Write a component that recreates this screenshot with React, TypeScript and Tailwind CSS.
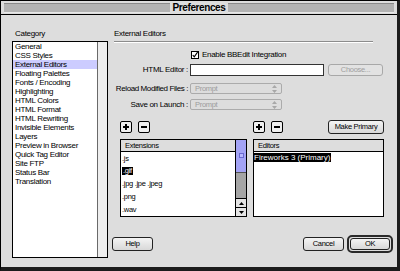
import React from "react";

const categories = [
  "General",
  "CSS Styles",
  "External Editors",
  "Floating Palettes",
  "Fonts / Encoding",
  "Highlighting",
  "HTML Colors",
  "HTML Format",
  "HTML Rewriting",
  "Invisible Elements",
  "Layers",
  "Preview in Browser",
  "Quick Tag Editor",
  "Site FTP",
  "Status Bar",
  "Translation",
];

const extensions = [".js", ".gif", ".jpg .jpe .jpeg", ".png", ".wav"];

const Arrows = ({ color }: { color: string }) => (
  <svg width="5" height="8" viewBox="0 0 5 8">
    <path d="M2.5 0 L5 3 H0 Z M0 5 H5 L2.5 8 Z" fill={color} />
  </svg>
);

const SmallButton = ({ sign }: { sign: "+" | "-" }) => (
  <div className="w-[12px] h-[12px] border border-black rounded-[2px] bg-[#eeeeee] flex items-center justify-center">
    <svg width="6" height="6" viewBox="0 0 6 6">
      <path d="M0 3 H6" stroke="#000" strokeWidth="2" />
      {sign === "+" && <path d="M3 0 V6" stroke="#000" strokeWidth="2" />}
    </svg>
  </div>
);

const Popup = () => (
  <div className="w-[92px] h-[11px] border border-[#ababab] rounded-[2px] flex items-center pl-[4px] pr-[4px] text-[#9c9c9c] text-[7.5px]">
    <span>Prompt</span>
    <span className="ml-auto flex">
      <Arrows color="#a8a8a8" />
    </span>
  </div>
);

const PushButton = ({ label, className = "" }: { label: string; className?: string }) => (
  <div
    className={`h-[14px] border border-[#222] rounded-[3px] bg-gradient-to-b from-[#f4f4f4] to-[#d8d8d8] flex items-center justify-center text-[7.5px] ${className}`}
  >
    {label}
  </div>
);

export default function App() {
  return (
    <div className="w-[400px] h-[271px] bg-[#dddddd] border-l border-t border-black border-r-[3px] border-b-[4px] border-r-[#1c1c1c] border-b-[#1c1c1c] flex flex-col font-['Liberation_Sans',Arial,sans-serif] text-black leading-none overflow-hidden">
      {/* title bar */}
      <div className="h-[14px] border-b border-black flex items-stretch px-[3px] pt-[2px] pb-[1px]">
        <div className="flex-1 bg-[#b3b3b3] border-t border-[#8a8a8a] border-b border-b-[#e8e8e8]" />
        <div className="px-[3px] text-[10px] font-bold tracking-[-0.4px] flex items-center">Preferences</div>
        <div className="flex-1 bg-[#b3b3b3] border-t border-[#8a8a8a] border-b border-b-[#e8e8e8]" />
      </div>

      <div className="flex flex-1 text-[8px] tracking-[-0.3px]">
        {/* category column */}
        <div className="ml-[11px] w-[96px] flex flex-col">
          <div className="mt-[14px] h-[9px] leading-[9px] pl-[3px]">Category</div>
          <div className="mt-[3px] h-[217px] border border-black bg-white flex">
            <div className="flex-1 flex flex-col">
              {categories.map((c) => (
                <div
                  key={c}
                  className={`h-[9px] leading-[9px] pl-[2px] ${c === "External Editors" ? "bg-[#ccccff]" : ""}`}
                >
                  {c}
                </div>
              ))}
            </div>
            <div className="w-[10px] border-l border-[#6a6a6a] bg-[#eeeeee]" />
          </div>
        </div>

        {/* settings panel */}
        <div className="ml-[6px] flex flex-col">
          <div className="mt-[14px] h-[9px] leading-[9px]">External Editors</div>
          <div className="mt-[3px] w-[259px] h-[2px] border-t border-[#8c8c8c] border-b border-b-white" />

          <div className="mt-[8px] h-[8px] flex items-center">
            <div className="ml-[77px] w-[8px] h-[8px] border border-black bg-white flex items-center justify-center">
              <svg width="8" height="8" viewBox="0 0 8 8" className="-mt-[1px]">
                <path d="M1 4 L3 6.5 L7.5 0" stroke="#000" strokeWidth="1.5" fill="none" />
              </svg>
            </div>
            <span className="ml-[3px]">Enable BBEdit Integration</span>
          </div>

          <div className="mt-[5px] h-[12px] flex items-center">
            <div className="w-[74px] text-right whitespace-nowrap">HTML Editor :</div>
            <div className="ml-[2px] w-[134px] h-[12px] border border-[#333] bg-white" />
            <div className="ml-[4px] w-[55px] h-[12px] border border-[#a8a8a8] rounded-[3px] bg-[#e2e2e2] flex items-center justify-center text-[#a0a0a0] text-[7.5px]">
              Choose...
            </div>
          </div>

          <div className="mt-[7px] h-[11px] flex items-center">
            <div className="w-[74px] flex justify-end whitespace-nowrap tracking-[-0.4px]">Reload Modified Files :</div>
            <div className="ml-[2px]">
              <Popup />
            </div>
          </div>

          <div className="mt-[5px] h-[11px] flex items-center">
            <div className="w-[74px] text-right whitespace-nowrap">Save on Launch :</div>
            <div className="ml-[2px]">
              <Popup />
            </div>
          </div>

          <div className="mt-[10px] h-[14px] flex items-center">
            <div className="ml-[6px] flex gap-[6px]">
              <SmallButton sign="+" />
              <SmallButton sign="-" />
            </div>
            <div className="ml-[103px] flex gap-[6px]">
              <SmallButton sign="+" />
              <SmallButton sign="-" />
            </div>
            <PushButton label="Make Primary" className="ml-[45px] w-[56px]" />
          </div>

          <div className="mt-[5px] h-[78px] flex">
            <div className="ml-[6px] w-[127px] border border-black bg-white flex">
              <div className="flex-1 flex flex-col">
                <div className="h-[12px] bg-[#dddddd] border-b border-black flex items-center pl-[4px] text-[7.5px]">
                  Extensions
                </div>
                {extensions.map((e) => (
                  <div key={e} className="h-[13px] flex items-center pl-[1px] text-[7.5px]">
                    <span className={e === ".gif" ? "bg-black text-white px-[1px] leading-[8px]" : ""}>{e}</span>
                  </div>
                ))}
              </div>
              <div className="w-[11px] border-l border-black flex flex-col">
                <div className="h-[33px] bg-[#a3a3f5] border-b border-[#555] flex items-start justify-center pt-[13px]">
                  <div className="w-[5px] h-[5px] border border-[#6a6ad0] bg-[#b8b8ff]" />
                </div>
                <div className="flex-1 bg-[#a5a5a5]" />
                <div className="h-[9px] bg-[#e4e4e4] border-t border-black flex items-center justify-center">
                  <svg width="5" height="3" viewBox="0 0 5 3">
                    <path d="M2.5 0 L5 3 H0 Z" fill="#000" />
                  </svg>
                </div>
                <div className="h-[9px] bg-[#e4e4e4] border-t border-black flex items-center justify-center">
                  <svg width="5" height="3" viewBox="0 0 5 3">
                    <path d="M0 0 H5 L2.5 3 Z" fill="#000" />
                  </svg>
                </div>
              </div>
            </div>
            <div className="ml-[6px] w-[131px] border border-black bg-white flex flex-col">
              <div className="h-[12px] bg-[#dddddd] border-b border-black flex items-center pl-[4px] text-[7.5px]">
                Editors
              </div>
              <div className="h-[11px] flex items-center">
                <span className="bg-black text-white leading-[9px] pr-[1px] tracking-normal">Fireworks 3 (Primary)</span>
              </div>
            </div>
          </div>

          <div className="mt-[18px] h-[18px] flex items-center">
            <PushButton label="Help" className="-ml-[2px] w-[41px]" />
            <PushButton label="Cancel" className="ml-[150px] w-[41px]" />
            <div className="ml-[3px] w-[46px] h-[18px] border-2 border-[#2a2a2a] rounded-[5px] p-px">
              <PushButton label="OK" className="w-full h-full" />
            </div>
          </div>
        </div>
      </div>
    </div>
  );
}
